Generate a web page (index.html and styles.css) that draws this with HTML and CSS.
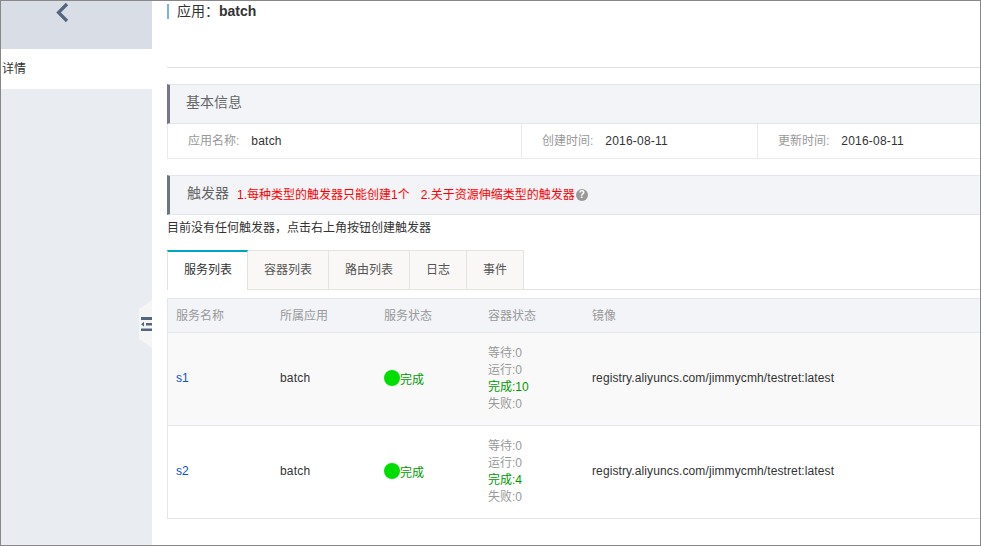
FILE: index.html
```html
<!DOCTYPE html>
<html lang="zh-CN">
  <head>
    <meta charset="UTF-8" />
    <meta name="viewport" content="width=device-width, initial-scale=1.0" />
    <title>应用详情</title>
    <link rel="stylesheet" href="styles.css">
  </head>
  <body>
    <div class="frame">
      <div class="sidebar">
        <div class="back">
          <svg width="14" height="22" viewBox="0 0 14 22"><path d="M12 3 L3.5 11.5 L12 20" fill="none" stroke="#54667f" stroke-width="3.2"/></svg>
        </div>
        <div class="nav-item">详情</div>
        <div class="toggle">
          <svg width="11" height="14" viewBox="0 0 11 14">
            <rect x="0" y="0" width="11" height="3" fill="#54667f"/>
            <rect x="5" y="6" width="6" height="2.5" fill="#54667f"/>
            <path d="M0 7.2 L3 4.8 V9.6 Z" fill="#54667f"/>
            <rect x="0" y="11.5" width="11" height="2.5" fill="#54667f"/>
          </svg>
        </div>
      </div>
      <div class="main">
        <div class="title"><span class="title-label">应用：</span><b>batch</b></div>
        <div class="title-line"></div>

        <div class="section-head grey">基本信息</div>
        <div class="info-row">
          <div class="info-cell first"><span class="label">应用名称:</span><span class="value">batch</span></div>
          <div class="info-cell second"><span class="label">创建时间:</span><span class="value">2016-08-11</span></div>
          <div class="info-cell third"><span class="label">更新时间:</span><span class="value">2016-08-11</span></div>
        </div>

        <div class="section-head dark">
          <span class="trigger-title">触发器</span>
          <span class="notice first-notice">1.每种类型的触发器只能创建1个</span>
          <span class="notice second-notice">2.关于资源伸缩类型的触发器</span>
          <span class="help">?</span>
        </div>
        <div class="empty">目前没有任何触发器，点击右上角按钮创建触发器</div>

        <div class="tabs">
          <div class="tab active">服务列表</div>
          <div class="tab">容器列表</div>
          <div class="tab">路由列表</div>
          <div class="tab">日志</div>
          <div class="tab">事件</div>
        </div>

        <div class="table">
          <div class="row head">
            <div class="col">服务名称</div>
            <div class="col">所属应用</div>
            <div class="col">服务状态</div>
            <div class="col">容器状态</div>
            <div class="col">镜像</div>
          </div>
          <div class="row odd">
            <div class="col"><a class="link">s1</a></div>
            <div class="col"><span class="value">batch</span></div>
            <div class="col status"><i class="dot"></i>完成</div>
            <div class="col counts">
              <div>等待:0</div>
              <div>运行:0</div>
              <div class="done">完成:10</div>
              <div>失败:0</div>
            </div>
            <div class="col image">registry.aliyuncs.com/jimmycmh/testret:latest</div>
          </div>
          <div class="row">
            <div class="col"><a class="link">s2</a></div>
            <div class="col"><span class="value">batch</span></div>
            <div class="col status"><i class="dot"></i>完成</div>
            <div class="col counts">
              <div>等待:0</div>
              <div>运行:0</div>
              <div class="done">完成:4</div>
              <div>失败:0</div>
            </div>
            <div class="col image">registry.aliyuncs.com/jimmycmh/testret:latest</div>
          </div>
        </div>
      </div>
    </div>
  </body>
</html>
```

FILE: styles.css
```css
* {
  box-sizing: border-box;
}
html, body {
  margin: 0;
  padding: 0;
}
body {
  font-family: "Liberation Sans", "Noto Sans CJK SC", sans-serif;
  font-size: 12px;
  color: #333;
  background-color: #fff;
}
.frame {
  width: 981px;
  height: 546px;
  display: flex;
  border: 1px solid #888;
  overflow: hidden;
}
.sidebar {
  width: 151px;
  flex-shrink: 0;
  background-color: #e9ecf1;
  position: relative;
}
.back {
  height: 48px;
  background-color: #d9dde5;
  padding-left: 54px;
}
.back svg {
  display: block;
}
.nav-item {
  height: 40px;
  line-height: 40px;
  background-color: #fff;
  padding-left: 1px;
  color: #333;
}
.toggle {
  position: absolute;
  right: 0;
  top: 299px;
  width: 13px;
  height: 48px;
  background-color: #f5f5f5;
  clip-path: polygon(100% 0, 100% 100%, 0 81%, 0 19%);
  display: flex;
  align-items: center;
  justify-content: flex-end;
}
.main {
  flex: 1;
  min-width: 0;
  padding-left: 15px;
}
.title {
  margin-top: 3px;
  height: 15px;
  line-height: 15px;
  border-left: 2px solid #77b5e0;
  padding-left: 8px;
  font-size: 14px;
  display: flex;
}
.title b {
  font-weight: bold;
  color: #333;
}
.title-line {
  margin-top: 48px;
  height: 1px;
  background-color: #dfe1e6;
}
.section-head {
  height: 40px;
  line-height: 34px;
  background-color: #f2f4f8;
  border: 1px solid #e3e6ec;
  border-right: 0;
  font-size: 14px;
  color: #666;
}
.grey {
  margin-top: 16px;
  border-left: 3px solid #77758c;
  padding-left: 16px;
}
.dark {
  margin-top: 16px;
  border-left: 3px solid #6c7680;
  padding-left: 17px;
  padding-bottom: 4px;
  display: flex;
  align-items: center;
}
.info-row {
  height: 35px;
  display: flex;
  border: 1px solid #eaeaea;
  border-top: 0;
  border-right: 0;
  line-height: 34px;
  color: #333;
}
.info-cell {
  padding-left: 20px;
  border-right: 1px solid #eaeaea;
}
.info-cell.first {
  width: 354px;
}
.info-cell.second {
  width: 236px;
}
.info-cell.third {
  flex: 1;
  border-right: 0;
}
.label {
  color: #999;
  margin-right: 12px;
}
.value {
  letter-spacing: 0.2px;
}
.trigger-title {
  color: #666;
  width: 50px;
  flex-shrink: 0;
}
.notice {
  color: #f00;
  font-size: 12px;
  position: relative;
  top: 2px;
}
.second-notice {
  margin-left: 11px;
}
.help {
  width: 12px;
  height: 12px;
  margin-left: 1px;
  border-radius: 50%;
  background-color: #999;
  color: #fff;
  font-size: 10px;
  font-weight: bold;
  line-height: 12px;
  text-align: center;
  position: relative;
  top: 2px;
}
.empty {
  margin-top: 5px;
  height: 16px;
  line-height: 16px;
  color: #333;
}
.tabs {
  margin-top: 14px;
  height: 40px;
  display: flex;
  border-bottom: 1px solid #e3e3e3;
}
.tab {
  height: 40px;
  line-height: 38px;
  padding: 0 16px;
  background-color: #faf8f6;
  border: 1px solid #e3e3e3;
  border-left: 0;
  color: #555;
  white-space: nowrap;
}
.tab.active {
  width: 81px;
  background-color: #fff;
  border-top: 2px solid #00a4ca;
  border-bottom: 0;
  border-left: 1px solid #e3e3e3;
  color: #333;
  line-height: 37px;
}
.table {
  margin-top: 8px;
  border: 1px solid #e3e6ec;
  border-right: 0;
}
.row {
  display: flex;
  height: 93px;
  padding-bottom: 2px;
  align-items: center;
  border-top: 1px solid #e3e6ec;
  color: #333;
}
.row.head {
  height: 33px;
  background-color: #f2f4f8;
  color: #999;
  border-top: 0;
}
.row.odd {
  background-color: #f9f9f9;
}
.col {
  width: 104px;
  padding-left: 8px;
  flex-shrink: 0;
}
.col:last-child {
  width: auto;
  flex: 1;
}
.image {
  letter-spacing: 0.11px;
}
.link {
  color: #0a50d0;
}
.status {
  display: flex;
  align-items: center;
  color: #090;
}
.dot {
  width: 16px;
  height: 16px;
  border-radius: 50%;
  background-color: #00dd00;
}
.counts {
  color: #999;
  line-height: 17px;
  margin-top: 2px;
}
.done {
  color: #090;
}
```
